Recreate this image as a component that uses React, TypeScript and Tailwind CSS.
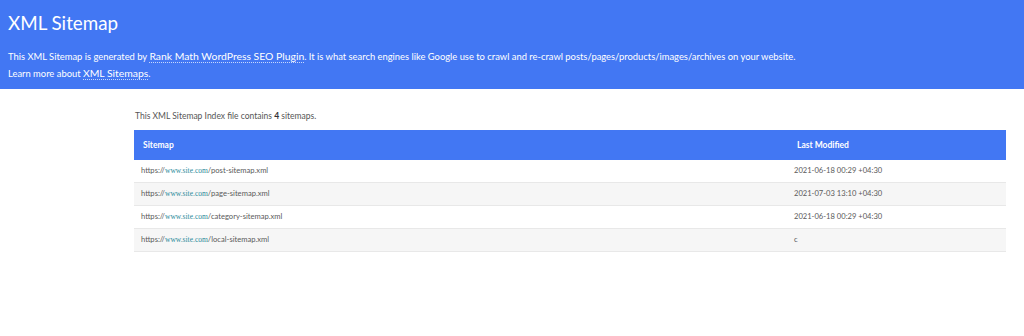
const ROWS = [
  { path: 'post-sitemap.xml', mod: '2021-06-18 00:29 +04:30' },
  { path: 'page-sitemap.xml', mod: '2021-07-03 13:10 +04:30' },
  { path: 'category-sitemap.xml', mod: '2021-06-18 00:29 +04:30' },
  { path: 'local-sitemap.xml', mod: 'c' },
];

const SiteUrl = ({ path }: { path: string }) => (
  <span>
    https://
    <span className="font-['Liberation_Serif',serif] text-[7.5px] text-[#2a8a9a]">www.site.com</span>/{path}
  </span>
);

export default function App() {
  return (
    <div className="h-[336px] w-[1024px] bg-white font-['Lato',sans-serif] text-[#555]">
      <div className="h-[89px] bg-[#4277f3] px-[8px] pt-[10px] text-white">
        <h1 className="text-[18.8px] leading-[25px]">XML Sitemap</h1>
        <p className="mt-[13px] text-[9.4px] leading-[16px]">
          This XML Sitemap is generated by{' '}
          <span className="border-b border-dotted border-white/70 text-[10.4px]">Rank Math WordPress SEO Plugin</span>. It
          is what search engines like Google use to crawl and re-crawl posts/pages/products/images/archives on your
          website.
          <br />
          Learn more about <span className="border-b border-dotted border-white/70 text-[10.4px]">XML Sitemaps</span>.
        </p>
      </div>

      <div className="ml-[134px] w-[872px] pt-[21px]">
        <p className="pl-[1px] text-[8.5px] leading-[12px]">
          This XML Sitemap Index file contains <b className="text-[#333]">4</b> sitemaps.
        </p>
        <div className="mt-[8px]">
          <div className="grid h-[30px] grid-cols-[654px_1fr] items-center bg-[#4277f3] text-[8.5px] font-bold text-white">
            <div className="pl-[9px]">Sitemap</div>
            <div className="pl-[9px]">Last Modified</div>
          </div>
          {ROWS.map((r, i) => (
            <div
              key={r.path}
              className={`grid h-[23px] grid-cols-[654px_1fr] items-center border-b border-[#e8e8e8] text-[7.6px] text-[#5a5a5a] ${
                i % 2 === 1 ? 'bg-[#f6f6f6]' : 'bg-white'
              }`}
            >
              <div className="pl-[7px]">
                <SiteUrl path={r.path} />
              </div>
              <div className="pl-[6px]">{r.mod}</div>
            </div>
          ))}
        </div>
      </div>
    </div>
  );
}
